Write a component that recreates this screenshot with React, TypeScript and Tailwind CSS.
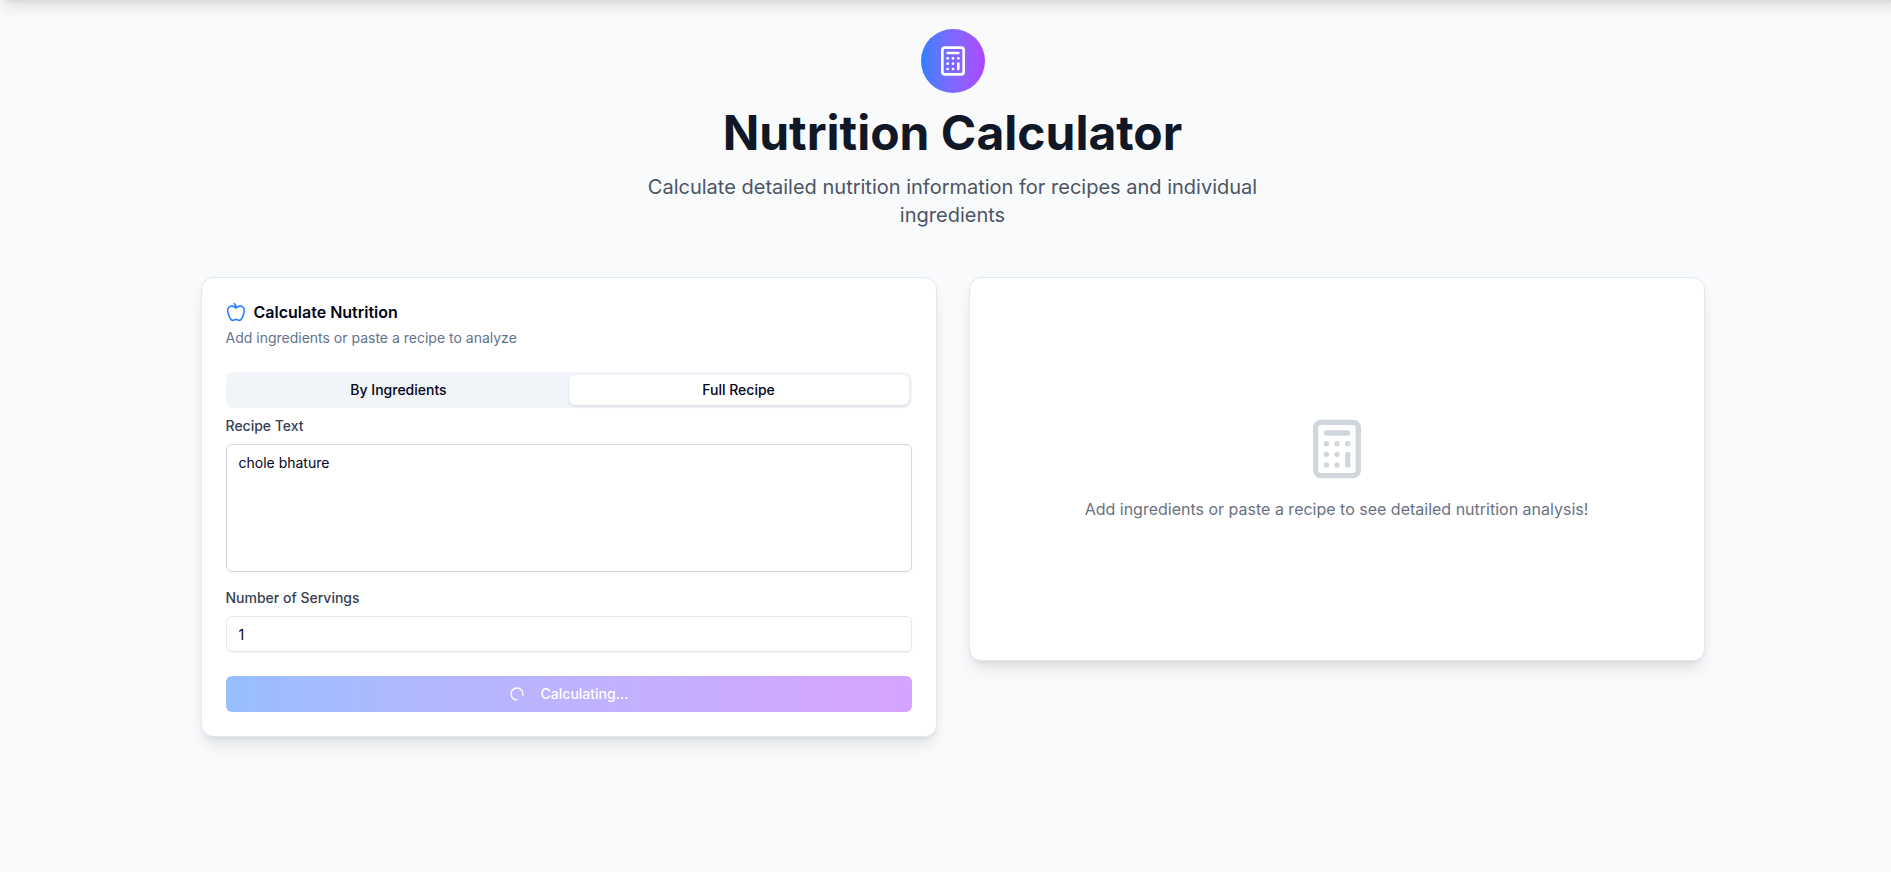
import { useState } from "react";
import { Calculator, LoaderCircle } from "lucide-react";

type Mode = "ingredients" | "recipe";

const tabs: { id: Mode; label: string }[] = [
  { id: "ingredients", label: "By Ingredients" },
  { id: "recipe", label: "Full Recipe" },
];

function AppleIcon({ className }: { className?: string }) {
  return (
    <svg
      viewBox="0 0 24 24"
      fill="none"
      stroke="currentColor"
      strokeWidth="2"
      strokeLinecap="round"
      strokeLinejoin="round"
      aria-hidden="true"
      className={className}
    >
      <path d="M12 20.94c1.5 0 2.75 1.06 4 1.06 3 0 6-8 6-12.22A4.91 4.91 0 0 0 17 5c-2.22 0-4 1.44-5 2-1-.56-2.78-2-5-2a4.9 4.9 0 0 0-5 4.78C2 14 5 22 8 22c1.25 0 2.5-1.06 4-1.06Z" />
      <path d="M10 2c1 .5 2 2 2 5" />
    </svg>
  );
}

export default function App() {
  const [mode, setMode] = useState<Mode>("recipe");
  const [recipe, setRecipe] = useState("chole bhature");
  const [servings, setServings] = useState("1");

  return (
    <div className="min-h-screen overflow-hidden bg-gray-50 font-[Inter,sans-serif] text-slate-950">
      <header className="-mt-16 -mr-4 h-16 bg-white shadow-lg" />
      <main className="pl-[14px]">
        <div className="mx-auto max-w-[1536px] px-4 pt-[29px] pb-8">
          <div className="mb-12 flex flex-col items-center text-center">
            <div className="mb-4 flex size-16 items-center justify-center rounded-full bg-linear-to-r from-blue-500 to-purple-500">
              <Calculator className="size-8 text-white" aria-hidden="true" />
            </div>
            <h1 className="mb-4 text-5xl leading-none font-bold text-gray-900">Nutrition Calculator</h1>
            <p className="max-w-2xl text-xl text-gray-600">
              Calculate detailed nutrition information for recipes and individual ingredients
            </p>
          </div>

          <div className="grid items-start gap-8 lg:grid-cols-2">
            <section className="flex flex-col gap-6 rounded-xl border border-slate-200 bg-white p-6 shadow-lg">
              <div className="flex flex-col gap-1.5">
                <h2 className="flex items-center gap-2 leading-none font-semibold">
                  <AppleIcon className="size-5 text-blue-500" />
                  Calculate Nutrition
                </h2>
                <p className="text-sm text-slate-500">Add ingredients or paste a recipe to analyze</p>
              </div>

              <form className="flex flex-col gap-6" onSubmit={(e) => e.preventDefault()}>
                <div className="flex flex-col gap-2">
                  <div role="tablist" className="grid h-9 grid-cols-2 rounded-lg bg-slate-100 p-[3px]">
                    {tabs.map((tab) => (
                      <button
                        key={tab.id}
                        type="button"
                        role="tab"
                        aria-selected={mode === tab.id}
                        onClick={() => setMode(tab.id)}
                        className="rounded-md text-sm font-medium aria-selected:bg-white aria-selected:shadow-sm"
                      >
                        {tab.label}
                      </button>
                    ))}
                  </div>
                  <div className="flex flex-col gap-4">
                    <div className="flex flex-col gap-2">
                      <label htmlFor="recipe" className="text-sm font-medium text-gray-700">
                        Recipe Text
                      </label>
                      <textarea
                        id="recipe"
                        value={recipe}
                        onChange={(e) => setRecipe(e.target.value)}
                        className="h-32 w-full resize-none rounded-md border border-gray-300 px-3 py-2 text-sm shadow-xs"
                      />
                    </div>
                    <div className="flex flex-col gap-2">
                      <label htmlFor="servings" className="text-sm font-medium text-gray-700">
                        Number of Servings
                      </label>
                      <input
                        id="servings"
                        inputMode="numeric"
                        value={servings}
                        onChange={(e) => setServings(e.target.value)}
                        className="h-9 w-full rounded-md border border-slate-200 px-3 py-1 text-sm shadow-xs"
                      />
                    </div>
                  </div>
                </div>
                <button
                  type="submit"
                  disabled
                  className="flex h-9 items-center justify-center gap-4 rounded-md bg-linear-to-r from-blue-500 to-purple-500 text-sm font-medium text-white disabled:opacity-50"
                >
                  <LoaderCircle className="size-4 rotate-90" aria-hidden="true" />
                  Calculating...
                </button>
              </form>
            </section>

            <section className="flex h-96 flex-col items-center justify-center gap-4 rounded-xl border border-slate-200 bg-white p-6 text-center shadow-lg">
              <Calculator className="size-16 text-gray-300" aria-hidden="true" />
              <p className="text-gray-500">Add ingredients or paste a recipe to see detailed nutrition analysis!</p>
            </section>
          </div>
        </div>
      </main>
    </div>
  );
}
